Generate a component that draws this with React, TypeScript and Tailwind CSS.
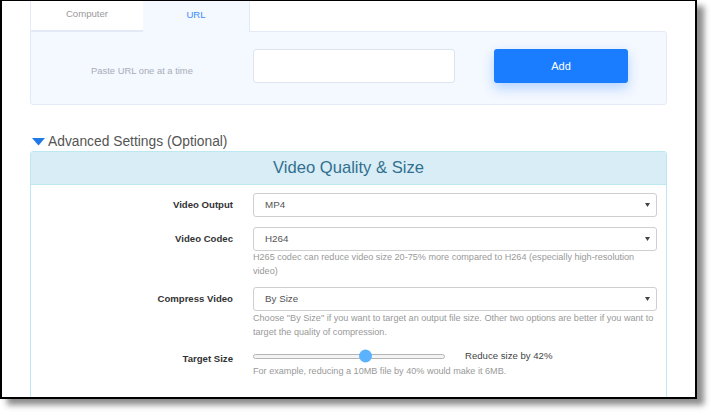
import React from 'react';

const Caret = () => (
  <svg width="5" height="4" viewBox="0 0 5 4" className="shrink-0">
    <path d="M0 0 L5 0 L2.5 4 Z" fill="#444" />
  </svg>
);

function SelectBox({ value }: { value: string }) {
  return (
    <div className="flex h-[24px] items-center justify-between rounded-[3px] border border-[#cfcfcf] bg-white pl-[11px] pr-[6px] text-[9.8px] text-[#555]">
      <span>{value}</span>
      <Caret />
    </div>
  );
}

function Label({ children, className = '' }: { children: React.ReactNode; className?: string }) {
  return (
    <div className={`w-[202px] shrink-0 text-right text-[9.6px] font-bold text-[#333] ${className}`}>
      {children}
    </div>
  );
}

export default function App() {
  return (
    <div
      className="h-[415px] w-[711px] overflow-hidden bg-white"
      style={{ fontFamily: '"Liberation Sans", Arial, sans-serif' }}
    >
      <div className="h-[399px] w-[697px] overflow-hidden border-b-2 border-l-2 border-r-2 border-t border-black bg-white shadow-[7px_6px_6px_rgba(0,0,0,0.45)]">
        <div className="pl-[28px]">
          {/* Upload tabs */}
          <div className="flex h-[30px] text-[9.6px]">
            <div className="flex w-[113px] items-center justify-center border-b border-l border-[#e3eaf6] bg-white pb-[2px] text-[#9a9a9a]">
              Computer
            </div>
            <div className="relative z-10 -mb-px flex h-[31px] w-[107px] items-center justify-center border-r border-[#e3eaf6] bg-[#f4f8ff] pb-[2px] text-[#3d8bfd]">
              URL
            </div>
          </div>
          <div className="flex h-[74px] w-[637px] items-start rounded-b-[3px] rounded-tr-[3px] border border-[#e3eaf6] bg-[#f4f8ff] pt-[17px]">
            <div className="w-[222px] pt-[15px] text-center text-[9.4px] text-[#a6adb8]">Paste URL one at a time</div>
            <div className="h-[34px] w-[202px] rounded-[3px] border border-[#dde4ef] bg-white" />
            <button className="ml-[39px] h-[34px] w-[134px] rounded-[3px] bg-[#1a7dff] text-[11px] text-white shadow-[0_5px_12px_rgba(26,125,255,0.3)]">
              Add
            </button>
          </div>

          {/* Advanced settings */}
          <div className="mt-[28px] flex h-[18px] items-center">
            <svg width="13" height="8" viewBox="0 0 13 8" className="ml-[2px] mr-[3px]">
              <path d="M0 0 L13 0 L6.5 7.5 Z" fill="#1f7ae8" />
            </svg>
            <span className="text-[13.8px] text-[#555]">Advanced Settings (Optional)</span>
          </div>

          <div className="w-[637px] rounded-t-[3px] border border-[#bce8f1]">
            <div className="h-[33px] border-b border-[#bce8f1] bg-[#d9edf7] text-center text-[16.6px] leading-[32px] text-[#31708f]">
              Video Quality &amp; Size
            </div>
            <div className="flex flex-col pb-[20px] pr-[9px] pt-[8px]">
              <div className="flex items-center gap-[20px]">
                <Label>Video Output</Label>
                <div className="flex-1">
                  <SelectBox value="MP4" />
                </div>
              </div>

              <div className="mt-[10px] flex items-start gap-[20px]">
                <Label className="leading-[24px]">Video Codec</Label>
                <div className="flex-1">
                  <SelectBox value="H264" />
                  <p className="text-[9.1px] leading-[13.5px] text-[#999]">
                    H265 codec can reduce video size 20-75% more compared to H264 (especially high-resolution video)
                  </p>
                </div>
              </div>

              <div className="mt-[9px] flex items-start gap-[20px]">
                <Label className="leading-[24px]">Compress Video</Label>
                <div className="flex-1">
                  <SelectBox value="By Size" />
                  <p className="text-[9.1px] leading-[14px] text-[#999]">
                    Choose "By Size" if you want to target an output file size. Other two options are better if you want to
                    target the quality of compression.
                  </p>
                </div>
              </div>

              <div className="mt-[9px] flex items-start gap-[20px]">
                <Label className="pt-[4px] leading-[14px]">Target Size</Label>
                <div className="flex-1">
                  <div className="flex h-[16px] items-center">
                    <div className="relative h-[5px] w-[192px] rounded-full border border-[#b5b5b5] bg-[#f4f4f4]">
                      <div className="absolute left-[105px] top-1/2 h-[13px] w-[13px] -translate-y-1/2 rounded-full bg-[#5cb3fd]" />
                    </div>
                    <span className="ml-[20px] text-[9.6px] text-[#444]">Reduce size by 42%</span>
                  </div>
                  <p className="text-[9.1px] leading-[14px] text-[#999]">
                    For example, reducing a 10MB file by 40% would make it 6MB.
                  </p>
                </div>
              </div>
            </div>
          </div>
        </div>
      </div>
    </div>
  );
}
